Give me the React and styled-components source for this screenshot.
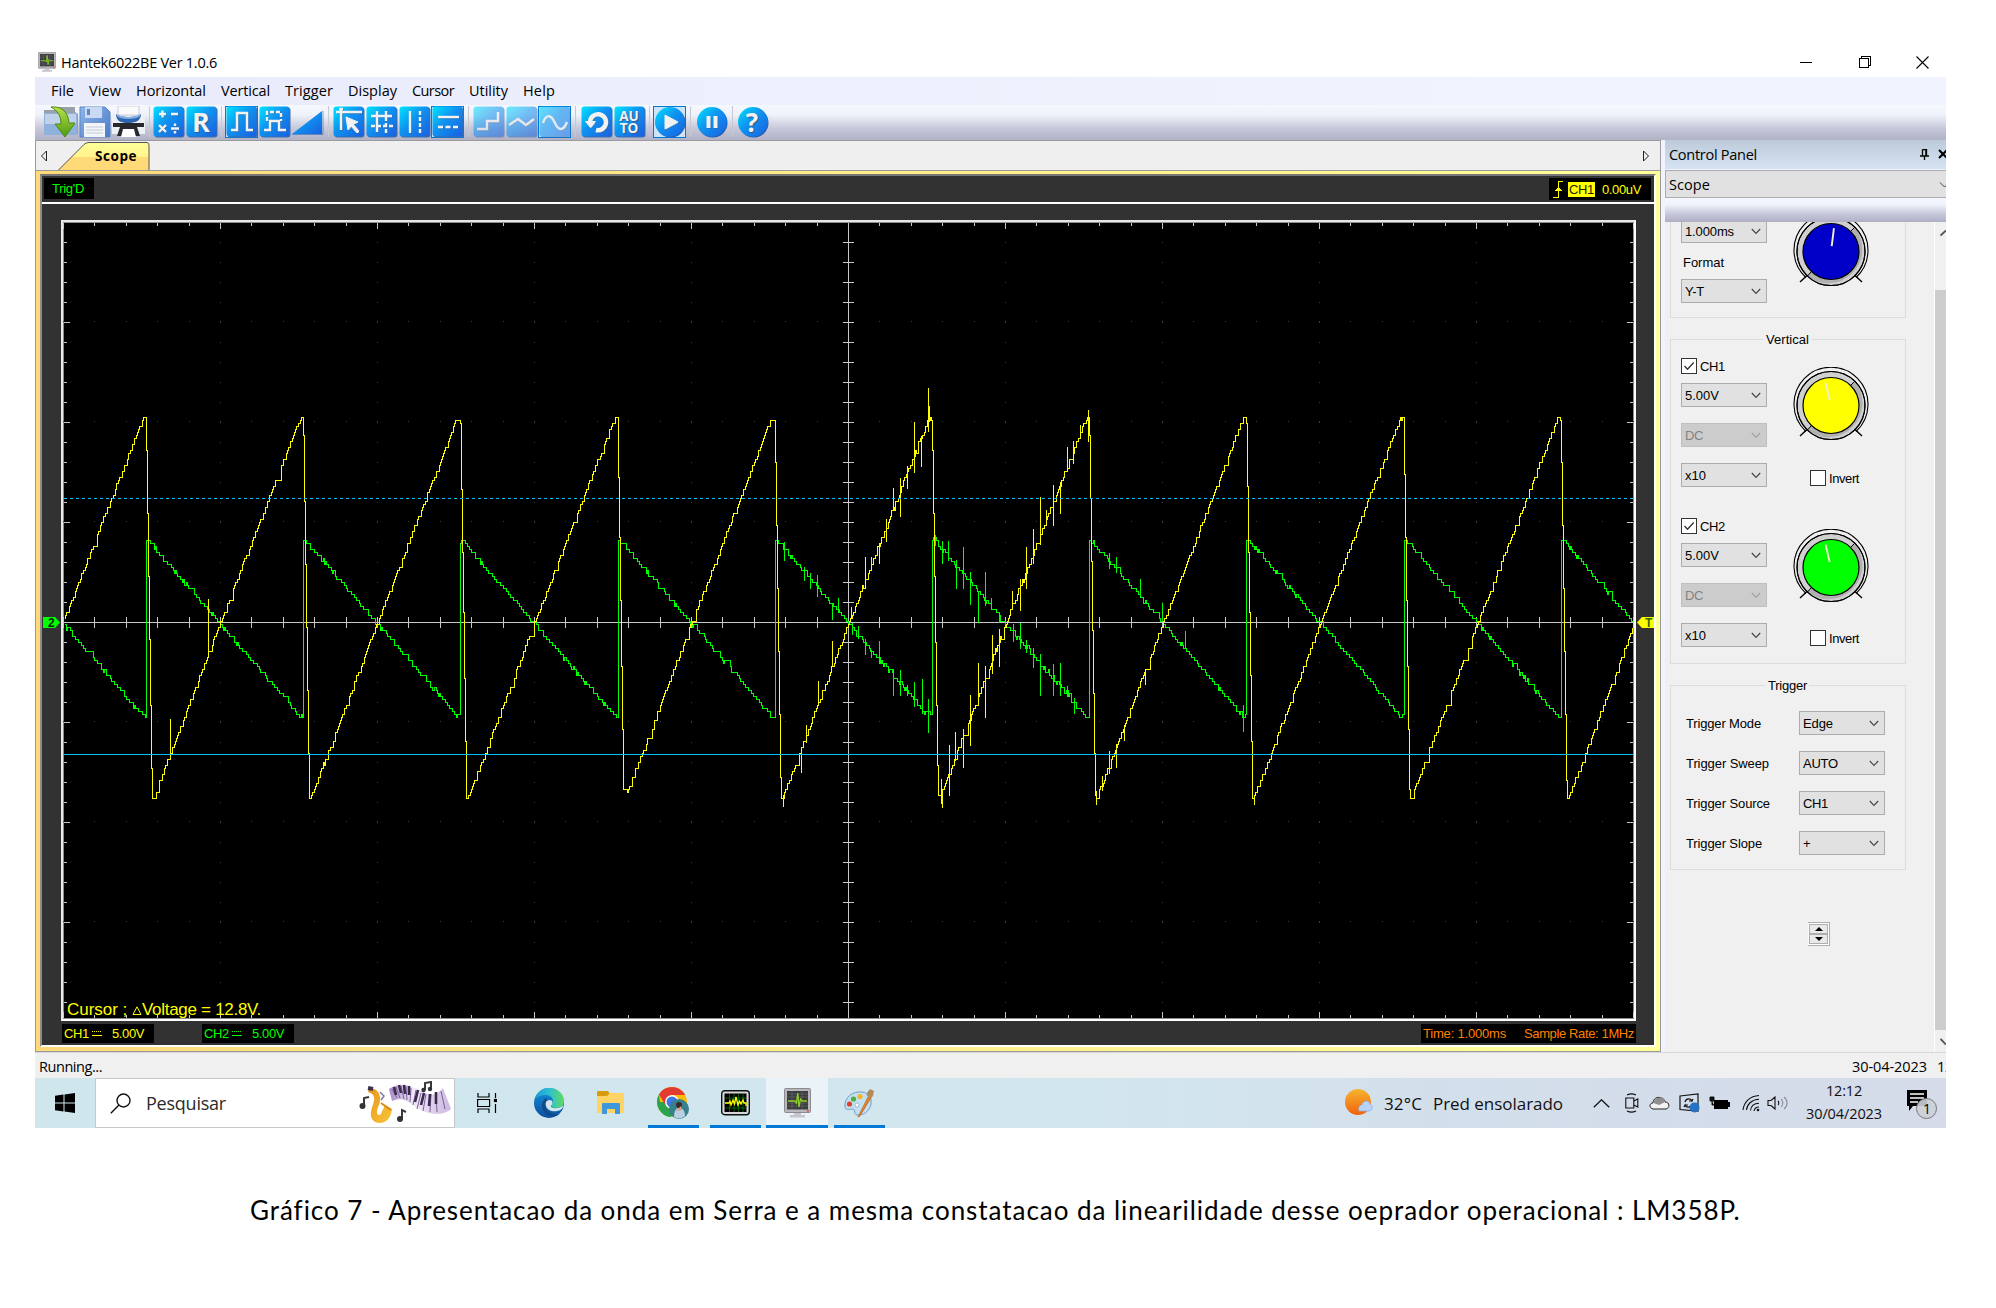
import React, { useLayoutEffect, useRef, useState } from "react";
import styled, { createGlobalStyle, css } from "styled-components";

const UI = '"Open Sans", "Noto Sans", sans-serif';
const ARIAL = '"Liberation Sans", Arial, sans-serif';

const GlobalStyle = createGlobalStyle`
  * { box-sizing: border-box; }
  body { margin: 0; background: #fff; color: #000; overflow: hidden; }
  svg { display: block; flex: none; }
`;

/* ---------- text fitted to a known advance width ---------- */

const FitSpan = styled.span`
  display: inline-block;
  white-space: pre;
  flex: none;
`;

function Fit({ w, children }) {
  const ref = useRef(null);
  const [spacing, setSpacing] = useState(0);
  useLayoutEffect(() => {
    const natural = ref.current.getBoundingClientRect().width;
    setSpacing((w - natural) / Math.max(1, String(children).length));
  }, [w, children]);
  return (
    <FitSpan ref={ref} style={{ letterSpacing: `${spacing}px` }}>
      {children}
    </FitSpan>
  );
}

/* ---------- page and window ---------- */

const Page = styled.main`
  width: 1996px;
  height: 1308px;
  padding: 46px 0 0 35px;
  background: #fff;
  font-family: ${UI};
`;

const Screen = styled.div`
  width: 1911px;
  height: 1082px;
  display: flex;
  flex-direction: column;
  overflow: hidden;
`;

const TitleBar = styled.header`
  height: 31px;
  flex: none;
  display: flex;
  align-items: center;
  padding: 1px 0 0 3px;
  font-size: 14.5px;
  gap: 5px;
`;

const WindowButtons = styled.div`
  margin-left: auto;
  display: flex;
  padding-right: -6px;
`;

const WindowButton = styled.div`
  width: 58.5px;
  height: 30px;
  display: flex;
  align-items: center;
  justify-content: center;
  &:last-child { width: 52px; padding-left: 5px; }
`;

const MenuBar = styled.nav`
  height: 28px;
  flex: none;
  display: flex;
  align-items: center;
  gap: 15px;
  padding-left: 16px;
  font-size: 14.5px;
  line-height: 20px;
  background: linear-gradient(90deg, #e9ebfb, #f1f4fe 80%);
`;

const ToolBar = styled.div`
  height: 35px;
  flex: none;
  display: flex;
  align-items: flex-start;
  padding: 1px 0 0 8px;
  background: linear-gradient(#f5f9fe 0%, #eff2fa 28%, #c9c9dc 65%, #b1b1c7 100%);
`;

const Tool = styled.div`
  width: ${(p) => p.$w || 33}px;
  height: 32px;
  display: flex;
  align-items: center;
  justify-content: center;
  border: ${(p) => (p.$active ? "1px solid #0078d7" : "0")};
  background: ${(p) => (p.$active ? "#cce4f7" : "transparent")};
  opacity: 1;
  svg { opacity: ${(p) => (p.$dim ? 0.55 : 1)}; }
`;

const ToolSep = styled.div`
  width: ${(p) => p.$w}px;
  height: 32px;
  display: flex;
  justify-content: center;
  &::before { content: ""; width: 1px; height: 31px; background: #c9c8cf; }
`;

const Workspace = styled.div`
  height: 912px;
  flex: none;
  display: flex;
`;

const Document = styled.section`
  width: 1626px;
  flex: none;
  display: flex;
  flex-direction: column;
`;

const TabStrip = styled.div`
  height: 30px;
  display: flex;
  align-items: flex-start;
  justify-content: space-between;
  border: 1px solid #9b9b9b;
  border-bottom: 0;
  background: #efefef;
  padding: 0 10px 0 4px;
`;

const TabLeft = styled.div`
  display: flex;
  align-items: flex-start;
  padding-top: 1px;
`;

const Arrow = styled.div`
  padding-top: ${(p) => p.$top}px;
`;

const Tab = styled.div`
  display: grid;
  margin-left: 8px;
  > * { grid-area: 1 / 1; }
`;

const TabText = styled.div`
  padding: 6px 0 0 39px;
  font-size: 13.5px;
  line-height: 17px;
  font-weight: 700;
`;

const YellowFrame = styled.div`
  height: 882px;
  padding: 3px 4px 4px 4px;
  border: 1px solid #9b9b9b;
  background: linear-gradient(90deg, #ffd97a, #ffff99);
`;

const Scope = styled.div`
  height: 873px;
  border: 2px solid;
  border-color: #777 #fff #fff #8c8c8c;
  background: #323232;
  display: flex;
  flex-direction: column;
  font-family: ${ARIAL};
`;

const ScopeTop = styled.div`
  height: 28px;
  flex: none;
  padding: 2px 3px 0 2px;
  display: flex;
  justify-content: space-between;
  border-bottom: 2px solid #fff;
`;

const Readout = styled.div`
  width: ${(p) => p.$w}px;
  height: ${(p) => p.$h || 19}px;
  display: flex;
  align-items: center;
  padding-left: ${(p) => p.$pad || 2}px;
  gap: ${(p) => p.$gap || 0}px;
  margin-right: ${(p) => p.$mr || 0}px;
  background: #000;
  color: ${(p) => p.$c};
  font-size: 13px;
  line-height: 15px;
`;

const TrigSource = styled.span`
  height: 15px;
  padding-left: 1px;
  width: 27px;
  background: #ff0;
  color: #222200;
  margin-right: 7px;
  overflow: hidden;
`;

const PlotRow = styled.div`
  height: 801px;
  margin-top: 16px;
  flex: none;
  display: flex;
`;

const Gutter = styled.div`
  width: ${(p) => p.$w}px;
  padding: 397px 0 0 1px;
`;

const PlotFrame = styled.div`
  position: relative;
  width: 1575px;
  height: 801px;
  border: 2px solid #fff;
  border-color: #e8e8e8 #fff #fff #e8e8e8;
  background: #000;
`;

const CursorText = styled.div`
  position: absolute;
  left: 4px;
  bottom: -1px;
  color: #ff0;
  font-size: 17px;
  line-height: 20px;
  display: flex;
  align-items: center;
`;

const ScopeBottom = styled.div`
  height: 24px;
  padding: 3px 18px 0 20px;
  display: flex;
`;

const Push = styled.div`
  flex: 1;
`;

/* ---------- control panel ---------- */

const Panel = styled.aside`
  flex: 1;
  min-width: 0;
  overflow: hidden;
  padding-left: 4px;
  background: #f1f4fe;
`;

const PanelHead = styled.div`
  height: 30px;
  display: flex;
  align-items: center;
  padding: 0 0 1px 4px;
  border-bottom: 1px solid #eef2fb;
  font-size: 14.5px;
  background: linear-gradient(#bccad9, #d6e3f3);
`;

const HeadIcons = styled.div`
  margin-left: auto;
  display: flex;
  align-items: center;
  gap: 9px;
`;

const PanelSelect = styled.div`
  height: 28px;
  display: flex;
  align-items: center;
  justify-content: space-between;
  padding: 0 0 0 3px;
  border: 1px solid #adadad;
  border-right: 0;
  background: #e1e1e1;
  font-size: 14.5px;
`;

const PanelBar = styled.div`
  height: 24px;
  background: linear-gradient(#f4f8fe 0%, #eef2fb 28%, #c9c9dc 65%, #aeaec6 100%);
`;

const PanelBody = styled.div`
  height: 830px;
  display: flex;
  justify-content: space-between;
  background: #f0f0f0;
  font-family: ${ARIAL};
  font-size: 13px;
`;

const Groups = styled.div`
  padding-left: 5px;
  overflow: hidden;
`;

const Group = styled.fieldset`
  width: 236px;
  height: ${(p) => p.$h}px;
  margin: ${(p) => p.$mt}px 0 0;
  min-width: 0;
  padding: ${(p) => p.$pt || 0}px 0 0 10px;
  border: 1px solid #dcdcdc;
  ${(p) => p.$cut && css`border-top: 0;`}
`;

const Legend = styled.div`
  height: 15px;
  width: ${(p) => p.$w}px;
  margin: -8px 0 0 ${(p) => p.$l}px;
  padding-left: 3px;
  line-height: 15px;
  background: #f0f0f0;
`;

const Columns = styled.div`
  display: flex;
  margin-top: ${(p) => p.$mt || 0}px;
`;

const Column = styled.div`
  width: ${(p) => p.$w}px;
  display: flex;
  flex-direction: column;
  padding-top: ${(p) => p.$pt || 0}px;
  padding-left: ${(p) => p.$pl || 0}px;
`;

const Combo = styled.div`
  width: 86px;
  height: 24px;
  flex: none;
  display: flex;
  align-items: center;
  justify-content: space-between;
  margin-bottom: ${(p) => p.$mb ?? 16}px;
  padding: 0 5px 0 3px;
  border: 1px solid ${(p) => (p.$off ? "#bfbfbf" : "#adadad")};
  background: ${(p) => (p.$off ? "#cccccc" : "#e1e1e1")};
  color: ${(p) => (p.$off ? "#838383" : "#000")};
`;

const FieldLabel = styled.div`
  height: 36px;
  line-height: 40px;
  padding-left: 2px;
`;

const CheckRow = styled.div`
  display: flex;
  align-items: center;
  gap: 3px;
  height: 16px;
  margin-bottom: ${(p) => p.$mb || 0}px;
  margin-left: ${(p) => p.$ml || 0}px;
`;

const Box = styled.div`
  width: 16px;
  height: 16px;
  border: 1px solid #333;
  background: #fff;
`;

const TriggerRow = styled.div`
  display: flex;
  align-items: center;
  justify-content: space-between;
  height: 24px;
  margin-bottom: 16px;
  padding: 0 20px 0 5px;
`;

const Spinner = styled.div`
  width: 22px;
  height: 24px;
  margin: 52px 0 0 138px;
  border: 1px solid #adadad;
  border-left: 0;
  padding: 1px;
  background: #fff;
  display: flex;
  flex-direction: column;
`;

const SpinButton = styled.div`
  flex: 1;
  display: flex;
  align-items: center;
  justify-content: center;
  border: 1px solid #adadad;
  background: #e9e9e9;
`;

const ScrollBar = styled.div`
  width: 12px;
  border-left: 1px solid #fff;
  display: flex;
  flex-direction: column;
  overflow: hidden;
`;

const ScrollArrow = styled.div`
  height: ${(p) => p.$h}px;
  padding: ${(p) => p.$pt}px 0 0 5px;
`;

const ScrollThumb = styled.div`
  height: 740px;
  background: #cdcdcd;
`;

/* ---------- status bar, taskbar and caption ---------- */

const StatusBar = styled.footer`
  height: 26px;
  flex: none;
  display: flex;
  align-items: center;
  justify-content: space-between;
  padding: 1px 0 0 4px;
  border-top: 1px solid #d7d7d7;
  background: #f0f0f0;
  font-size: 14.5px;
`;

const Clock = styled.div`
  width: 94px;
  flex: none;
  display: flex;
  gap: 10px;
  overflow: hidden;
`;

const TaskBar = styled.div`
  height: 50px;
  flex: none;
  display: flex;
  background: linear-gradient(90deg, #cfe6ed 0%, #d2e6ee 55%, #d3deeb 78%, #d5dbe9 100%);
`;

const Start = styled.div`
  width: 60px;
  display: flex;
  align-items: center;
  justify-content: center;
`;

const Search = styled.div`
  width: 360px;
  display: flex;
  align-items: center;
  padding: 0 3px 0 14px;
  border: 1px solid #c4c8ca;
  background: #fff;
  color: #2b2b2b;
  font-size: 18px;
  gap: 15px;
`;

const TaskItem = styled.div`
  width: ${(p) => p.$w || 62}px;
  display: flex;
  align-items: center;
  justify-content: center;
  border: solid transparent;
  border-width: 3px 0;
  background: ${(p) => (p.$active ? "#eaf4f8" : "transparent")};
  ${(p) => p.$open && css`
    background-image: linear-gradient(#0078d7, #0078d7);
    background-repeat: no-repeat;
    background-position: center bottom;
    background-size: ${p.$active ? "62px" : "51px"} 3px;
    background-origin: border-box;
  `}
`;

const Weather = styled.div`
  display: flex;
  align-items: center;
  margin-left: auto;
  font-size: 17px;
  color: #111;
  gap: 11px;
`;

const Tray = styled.div`
  display: flex;
  align-items: center;
  margin-left: 28px;
`;

const TrayIcon = styled.div`
  width: ${(p) => p.$w}px;
  display: flex;
  justify-content: center;
`;

const DateTime = styled.div`
  width: 92px;
  padding-top: 1px;
  display: flex;
  flex-direction: column;
  align-items: center;
  font-size: 14.5px;
  line-height: 23px;
  color: #111;
`;

const Notify = styled.div`
  width: 56px;
  padding-left: 16px;
  display: flex;
  align-items: center;
`;

const Caption = styled.p`
  width: 1700px;
  height: 32px;
  margin: 66px 0 0 215px;
  overflow: hidden;
  font-family: Lato, Carlito, sans-serif;
  font-size: 26px;
  line-height: 32px;
  span { margin-top: -7px; }
`;

/* ---------- toolbar glyphs ---------- */

function Gradients() {
  return (
    <svg width="0" height="0" style={{ position: "absolute" }}>
      <defs>
        <linearGradient id="blue" x1="0" y1="0" x2="1" y2="1">
          <stop offset="0" stopColor="#00e4ff" />
          <stop offset=".45" stopColor="#0f93f0" />
          <stop offset="1" stopColor="#1a5fe0" />
        </linearGradient>
        <linearGradient id="disk" x1="0" y1="0" x2="1" y2="1">
          <stop offset="0" stopColor="#8fb6ea" />
          <stop offset="1" stopColor="#4a7ac6" />
        </linearGradient>
        <linearGradient id="green" x1="0" y1="0" x2="0" y2="1">
          <stop offset="0" stopColor="#b8e04a" />
          <stop offset="1" stopColor="#4f9a10" />
        </linearGradient>
        <linearGradient id="tab" x1="0" y1="0" x2="0" y2="1">
          <stop offset="0" stopColor="#ffff99" />
          <stop offset=".5" stopColor="#fff38c" />
          <stop offset=".52" stopColor="#ffdc78" />
          <stop offset="1" stopColor="#ffd878" />
        </linearGradient>
        <linearGradient id="sun" x1="0" y1="0" x2="0" y2="1">
          <stop offset="0" stopColor="#f6b52f" />
          <stop offset="1" stopColor="#f0620c" />
        </linearGradient>
        <linearGradient id="edgeTop" x1="0" y1="0" x2="1" y2="0">
          <stop offset="0" stopColor="#1c9bd8" />
          <stop offset=".5" stopColor="#2fc0d0" />
          <stop offset="1" stopColor="#5fdc5c" />
        </linearGradient>
        <linearGradient id="edgeBody" x1="0" y1="0" x2="0" y2="1">
          <stop offset="0" stopColor="#1391dd" />
          <stop offset="1" stopColor="#0c4f9c" />
        </linearGradient>
        <linearGradient id="keys" x1="0" y1="0" x2="1" y2="0">
          <stop offset="0" stopColor="#a58bc6" />
          <stop offset=".4" stopColor="#f2e8f8" />
          <stop offset="1" stopColor="#cdb8de" />
        </linearGradient>
        <linearGradient id="sax" x1="0" y1="0" x2="1" y2="1">
          <stop offset="0" stopColor="#e8951c" />
          <stop offset="1" stopColor="#f7c63a" />
        </linearGradient>
      </defs>
    </svg>
  );
}

function BlueTile({ children, round }) {
  return (
    <svg width="32" height="32" viewBox="0 0 32 32" fill="none">
      {round ? (
        <>
          <circle cx="16.8" cy="16.8" r="14.7" fill="#235a9e" />
          <circle cx="16" cy="16" r="15" fill="url(#blue)" />
        </>
      ) : (
        <>
          <rect x="1.5" y="1.5" width="30" height="30" rx="3" fill="#3b6ea8" />
          <rect x=".5" y=".5" width="30" height="30" rx="3" fill="url(#blue)" />
        </>
      )}
      <g stroke="#45628c" strokeWidth="2.4" opacity=".45" transform="translate(1 1)">{children}</g>
      <g stroke="#f2f2f2" strokeWidth="2.4">{children}</g>
    </svg>
  );
}

const TileText = styled.div`
  display: grid;
  place-items: center;
  > * { grid-area: 1 / 1; }
  span {
    z-index: 1;
    color: #f2f2f2;
    font: 700 ${(p) => p.$s}px/${(p) => p.$lh}px ${UI};
    text-align: center;
    white-space: pre;
    text-shadow: 1px 1px 1px #35588c;
    padding-right: 1px;
  }
`;

function TextTile({ children, size, lh, round }) {
  return (
    <TileText $s={size} $lh={lh}>
      <BlueTile round={round} />
      <span>{children}</span>
    </TileText>
  );
}

const OpenIcon = () => (
  <svg width="36" height="32" viewBox="0 0 36 32">
    <path d="M1 4h12l3-3h16v5l3 2v20H1z" fill="#9aa0aa" />
    <path d="M1 7h33v22H1z" fill="#8fb1dc" />
    <path d="M2 8h31v10H2z" fill="#bfd2ea" />
    <path d="M8 1c10-1 17 4 18 16h6l-10 14-10-13h6c0-8-3-13-10-17z" fill="url(#green)" stroke="#4b8a12" />
  </svg>
);

const SaveIcon = () => (
  <svg width="32" height="32" viewBox="0 0 32 32">
    <path d="M1 1h25l5 5v25H1z" fill="url(#disk)" stroke="#5a83c0" />
    <rect x="6" y="1" width="17" height="11" fill="#c9daf2" />
    <rect x="8" y="3" width="3" height="6" fill="#5d86c6" />
    <rect x="5" y="17" width="21" height="14" fill="#f2f5fa" />
    <path d="M7 21h17M7 24h17M7 27h17" stroke="#c3cad6" />
  </svg>
);

const PrintIcon = () => (
  <svg width="35" height="32" viewBox="0 0 35 32">
    <path d="M1 8h33v20H1z" fill="#eceff3" />
    <path d="M7 0h21v9H7z" fill="#fafafa" stroke="#ccd" />
    <path d="M5 8c0 7 5 9 12 9s13-2 13-9c-4 4-21 4-25 0z" fill="#2c64ad" />
    <path d="M6 9c5 4 18 4 23 0" stroke="#84ade0" fill="none" strokeWidth="2" />
    <path d="M2 17h31v4H26l3 9h-5l-2-7H13l-2 7H6l3-9H2z" fill="#26282c" />
    <path d="M12 23h11l2 8H10z" fill="#fff" />
  </svg>
);

const TriangleIcon = () => (
  <svg width="33" height="32" viewBox="0 0 33 32">
    <path d="M1 28L31 5v23z" fill="url(#blue)" />
    <path d="M1 28.5h31V5" stroke="#2468b4" fill="none" opacity=".6" />
  </svg>
);

const Math4 = () => (
  <BlueTile>
    <path d="M6 8h7M9.500 4.500v7M18 8h7M6 19l7 7M13 19l-7 7M18 22.500h8M22 17.500v2.400M22 25v2.400" />
  </BlueTile>
);

/* ---------- small glyphs ---------- */

const Chevron = ({ c = "#444", w = 10 }) => (
  <svg width={w} height="7" viewBox="0 0 10 7">
    <path d="M.8 1l4.200 4.500L9.200 1" fill="none" stroke={c} strokeWidth="1.100" />
  </svg>
);

const Check = () => (
  <svg width="14" height="14" viewBox="0 0 14 14">
    <path d="M2.500 7l3 3.300 6.200-6.800" fill="none" stroke="#333" strokeWidth="1.300" />
  </svg>
);

const Monitor = ({ s }) => (
  <svg width={s} height={(s * 30) / 27} viewBox="0 0 27 30">
    <rect x=".5" y=".5" width="26" height="24" rx="1" fill="#b9b9bd" stroke="#8b8b90" />
    <rect x="3" y="3" width="21" height="18.500" fill="#3c3d3f" />
    <path d="M3 6h21M3 9h21M3 15h21M3 18h21M8 3v18M18 3v18" stroke="#6b6c6e" strokeWidth=".6" />
    <path d="M4 13h7l1.500 2 1.300-10 1.200 14 1.500-8 1.500 2H23" fill="none" stroke="#8dd12a" strokeWidth="1.300" />
    <path d="M10 25h7v2h4v2.500H6V27h4z" fill="#c5c5ca" />
    <circle cx="24" cy="22.800" r=".9" fill="#e23" />
  </svg>
);

function Knob({ color, angle }) {
  return (
    <svg width="78" height="78" viewBox="-39 -39 78 78" fill="none">
      <circle r="34" cy="-.5" fill="#d0d0d0" stroke="#000" strokeWidth="1.100" />
      <path d="M20-21A28.500 28.500 0 0 1-20 20L-23.500 24A34 34 0 0 0 24-24z" fill="#b0b0b0" />
      <path d="M20-21l4-4M-20 20l-3.500 4" stroke="#000" />
      <circle r="34" cy="-.5" stroke="#000" strokeWidth="1.100" />
      <circle r="28" cy="-.5" fill={color} stroke="#000" strokeWidth="1.200" />
      <path d="M-25 25.500A37 37 0 1 1 25 25.500" stroke="#000" strokeWidth="1.100" />
      <path d="M-31 30l7.500-7M31 30l-7.500-7" stroke="#000" strokeWidth="1.400" />
      <path d="M0-6v-18" stroke="#f2f0d0" strokeWidth="1.900" transform={`rotate(${angle})`} />
    </svg>
  );
}

/* ---------- oscilloscope plot ---------- */

const X0 = 63;
const X1 = 1634;
const MIDX = 848;
const MIDY = 622;
const PERIOD = 157.2;
const EDGE = 145.5;

const yellowSpikes = {
  170: [718, 726], 208: [598, 612], 801: [755, 772], 806: [724, 742], 818: [680, 700], 832: [640, 663],
  851: [606, 618], 865: [556, 580], 871: [556, 566], 879: [542, 563], 886: [518, 541], 893: [487, 510],
  900: [477, 516], 907: [465, 488], 914: [421, 472], 921: [435, 466], 928: [387, 431], 929: [405, 421],
  941: [778, 803], 942: [790, 807], 949: [744, 795], 955: [731, 760], 963: [728, 767], 970: [694, 745],
  978: [662, 700], 985: [665, 717], 992: [634, 673], 999: [628, 666], 1012: [590, 607], 1020: [578, 610],
  1026: [546, 588], 1033: [528, 563], 1040: [496, 544], 1046: [509, 525], 1053: [484, 525], 1060: [481, 513],
  1067: [446, 466], 1073: [440, 463], 1080: [424, 436], 1088: [409, 441], 1096: [790, 804], 1102: [775, 790],
  1109: [750, 773], 1116: [743, 767], 1124: [724, 740], 1145: [668, 684], 783: [794, 806], 1254: [795, 804],
};

const greenSpikes = {
  784: [541, 560], 804: [566, 580], 810: [572, 588], 817: [574, 596], 832: [603, 619], 838: [597, 612],
  852: [622, 634], 858: [625, 638], 865: [638, 654], 871: [649, 657], 879: [640, 663], 893: [668, 695],
  900: [669, 695], 907: [684, 695], 914: [681, 706], 922: [678, 713], 928: [698, 732], 935: [534, 545],
  942: [540, 563], 948: [540, 560], 956: [559, 588], 963: [546, 588], 970: [571, 604], 978: [590, 622],
  985: [571, 605], 991: [597, 609], 999: [612, 622], 1013: [623, 641], 1020: [622, 648], 1026: [639, 652],
  1033: [647, 667], 1040: [653, 695], 1053: [663, 695], 1060: [662, 695], 1067: [685, 696], 1074: [697, 713],
  1109: [552, 568], 1116: [556, 572], 1140: [578, 594], 1162: [602, 616], 1185: [630, 644], 1243: [704, 731],
};

function seeded(seed) {
  let s = seed;
  return () => {
    s = (s * 1664525 + 1013904223) % 4294967296;
    return s / 4294967296;
  };
}

function yellowAt(x) {
  const p = (((x - EDGE) % PERIOD) + PERIOD) % PERIOD;
  if (p < 6) return 418 + (p / 6) * 379;
  if (p < 8) return 798;
  if (p < 74.500) return 797 - ((p - 8) / 66.500) * 175;
  if (p < 154) return 622 - ((p - 74.500) / 79.500) * 204;
  return 418;
}

function greenAt(x) {
  const p = (((x - EDGE) % PERIOD) + PERIOD) % PERIOD;
  if (p < 2) return 540;
  if (p > 154) return 716;
  return 540 + ((p - 2) / 152) * 176;
}

function buildTrace(fn, spikes, seed, hold) {
  const rnd = seeded(seed);
  let d = "";
  let last = 0;
  for (let x = 64; x < 1633; x += 1) {
    const busy = x > 850 && x < 1100 ? 1.500 : 1;
    const target = fn(x) + (rnd() - 0.5) * 3.500 * busy;
    const jump = Math.abs(target - last) > 12;
    if (x === 64 || jump || rnd() > hold) last = Math.round(target / 3) * 3 + 0.5;
    d += x === 64 ? `M64.5 ${last}` : `H${x + 0.5}V${last}`;
    const s = spikes[x];
    if (s) d += `V${s[0] + 0.5}V${s[1] + 0.5}V${last}`;
  }
  return d;
}

const yellowPath = buildTrace(yellowAt, yellowSpikes, 11, 0.3);
const greenPath = buildTrace(greenAt, greenSpikes, 5, 0.3);

function buildGrid() {
  let ticks = "";
  let dots = "";
  for (let i = -25; i <= 25; i += 1) {
    const x = Math.round(MIDX + i * 31.4) + 0.5;
    const len = i % 5 === 0 ? 6 : 3;
    ticks += `M${x} 223v${len}M${x} 1018v${-len}`;
    ticks += `M${x} 617v11`;
    for (let r = -3; r <= 3; r += 1) if (r) dots += `M${x - 0.5} ${MIDY + r * 100 - 0.5}h1`;
  }
  for (let j = -39; j <= 39; j += 1) {
    const y = MIDY + j * 20 + 0.5;
    if (y < 225 || y > 1017) continue;
    const len = j % 5 === 0 ? 6 : 3;
    ticks += `M64 ${y}h${len}M1633 ${y}h${-len}M843 ${y}h11`;
    for (let c = -4; c <= 4; c += 1) if (c) dots += `M${Math.round(MIDX + c * 157)} ${y}h1`;
  }
  return { ticks, dots };
}

const grid = buildGrid();

function Plot() {
  return (
    <svg
      width={X1 - X0}
      height="797"
      viewBox={`${X0} 222 ${X1 - X0} 797`}
      shapeRendering="crispEdges"
      fill="none"
    >
      <path d="M63.500 1018V222.500H1633.500V1018.500H63" stroke="#8d8d8d" />
      <path d={grid.dots} stroke="#3c3c3c" />
      <path d={grid.ticks} stroke="#c8c8c8" />
      <path d={`M64 ${MIDY + 0.5}H1633M${MIDX + 0.5} 223V1018`} stroke="#c8c8c8" />
      <path d={greenPath} stroke="#00ff00" />
      <path d={yellowPath} stroke="#ffff00" />
      <path d="M64 498.500H1633" stroke="#00c0ff" strokeDasharray="3 3" />
      <path d="M64 754.500H1633" stroke="#00c0ff" />
    </svg>
  );
}

const Marker = styled.div`
  width: 17px;
  height: 11px;
  overflow: hidden;
  font: 700 12px/12px ${ARIAL};
  background: ${(p) => p.$c};
  color: ${(p) => (p.$right ? "#2c6a00" : "#002800")};
  padding-left: ${(p) => (p.$right ? 8 : 5)}px;
  clip-path: ${(p) =>
    p.$right ? "polygon(5px 0, 100% 0, 100% 100%, 5px 100%, 0 50%)" : "polygon(0 0, 12px 0, 100% 50%, 12px 100%, 0 100%)"};
`;

const DcGlyph = ({ c }) => (
  <svg width="10" height="5" viewBox="0 0 10 5" shapeRendering="crispEdges">
    <path d="M0 .5h10" stroke={c} strokeDasharray="1 1" />
    <path d="M0 4.500h10" stroke={c} />
  </svg>
);

/* ---------- panel parts ---------- */

function Select({ children, w, off, mb }) {
  return (
    <Combo $off={off} $mb={mb}>
      <Fit w={w}>{children}</Fit>
      <Chevron c={off ? "#a3a3a3" : "#444"} />
    </Combo>
  );
}

function Channel({ name, color, mt, knobTop, invertTop }) {
  return (
    <Columns $mt={mt}>
      <Column $w={111}>
        <CheckRow $mb={9}>
          <Box><Check /></Box>
          <Fit w={25}>{name}</Fit>
        </CheckRow>
        <Select w={34}>5.00V</Select>
        <Select w={18} off>DC</Select>
        <Select w={21} mb={0}>x10</Select>
      </Column>
      <Column $w={100} $pt={knobTop}>
        <Knob color={color} angle={-13} />
        <CheckRow $ml={18} style={{ marginTop: invertTop }}>
          <Box />
          <Fit w={30}>Invert</Fit>
        </CheckRow>
      </Column>
    </Columns>
  );
}

function ControlPanel() {
  return (
    <Panel>
      <PanelHead>
        <Fit w={88}>Control Panel</Fit>
        <HeadIcons>
          <svg width="9" height="11" viewBox="0 0 9 11" fill="none" stroke="#000">
            <path d="M2.500.500h4v6M2.500.500v6M0 7h9M4.500 7v4" strokeWidth="1.300" />
            <path d="M6 1v6" strokeWidth="1.500" />
          </svg>
          <svg width="8" height="10" viewBox="0 0 8 10">
            <path d="M1 1l8 8M9 1L1 9" stroke="#000" strokeWidth="2" />
          </svg>
        </HeadIcons>
      </PanelHead>
      <PanelSelect>
        <Fit w={41}>Scope</Fit>
        <svg width="7" height="7" viewBox="0 0 7 7">
          <path d="M1 1.500l4.500 4.500L10 1.500" fill="none" stroke="#444" />
        </svg>
      </PanelSelect>
      <PanelBar />
      <PanelBody>
        <Groups>
          <Group $h={96} $mt={0} $cut>
            <Columns $mt={-3}>
              <Column $w={111}>
                <Select w={49} mb={0}>1.000ms</Select>
                <FieldLabel><Fit w={41}>Format</Fit></FieldLabel>
                <Select w={19}>Y-T</Select>
              </Column>
              <Column $w={100} $pt={-7}>
                <div style={{ marginTop: -6 }}>
                  <Knob color="#0000c8" angle={7} />
                </div>
              </Column>
            </Columns>
          </Group>
          <Group $h={325} $mt={21}>
            <Legend $w={48} $l={82}><Fit w={43}>Vertical</Fit></Legend>
            <Channel name="CH1" color="#ffff00" mt={11} knobTop={9} invertTop={25} />
            <Channel name="CH2" color="#00ff00" mt={31} knobTop={11} invertTop={23} />
          </Group>
          <Group $h={185} $mt={21}>
            <Legend $w={44} $l={84}><Fit w={39}>Trigger</Fit></Legend>
            <Columns $mt={18} />
            <TriggerRow><Fit w={75}>Trigger Mode</Fit><Select w={30} mb={0}>Edge</Select></TriggerRow>
            <TriggerRow><Fit w={83}>Trigger Sweep</Fit><Select w={35} mb={0}>AUTO</Select></TriggerRow>
            <TriggerRow><Fit w={84}>Trigger Source</Fit><Select w={25} mb={0}>CH1</Select></TriggerRow>
            <TriggerRow><Fit w={76}>Trigger Slope</Fit><Select w={8} mb={0}>+</Select></TriggerRow>
          </Group>
          <Spinner>
            <SpinButton><svg width="8" height="4"><path d="M0 4L4 0l4 4z" /></svg></SpinButton>
            <SpinButton><svg width="8" height="4"><path d="M0 0l4 4 4-4z" /></svg></SpinButton>
          </Spinner>
        </Groups>
        <ScrollBar>
          <ScrollArrow $h={68} $pt={7}>
            <svg width="6" height="8" viewBox="0 0 6 8"><path d="M.5 6.500L6 1.500" stroke="#555" strokeWidth="1.800" /></svg>
          </ScrollArrow>
          <ScrollThumb />
          <ScrollArrow $h={22} $pt={8}>
            <svg width="6" height="8" viewBox="0 0 6 8"><path d="M.5 1L6 6.500" stroke="#555" strokeWidth="1.800" /></svg>
          </ScrollArrow>
        </ScrollBar>
      </PanelBody>
    </Panel>
  );
}

/* ---------- taskbar drawings ---------- */

const WindowsLogo = () => (
  <svg width="20" height="20" viewBox="0 0 20 20">
    <path d="M0 2.800L8.500 1.500v8H0zM9.500 1.400L20 0v9.500H9.500zM0 10.500h8.500v8L0 17.200zM9.500 10.500H20V20L9.500 18.600z" />
  </svg>
);

const MusicArt = () => (
  <svg width="92" height="44" viewBox="0 0 92 44" fill="none">
    <path d="M30 8C44-1 54 6 64 11s14 2 20-4l8 21c-8 7-20 6-30 1S46 14 33 20z" fill="url(#keys)" />
    <path d="M33 8l5 9M37 6l4 11M42 5l3 13M47 5l1 14M52 7l-1 14M57 9l-3 15M62 12l-4 16M67 13l-3 17M72 13l-1 18M77 12l1 19M82 10l4 18" stroke="#7b5f9b" />
    <path d="M35 6l2 8M40 4l2 8M45 4l1 9M50 5v9M59 9l-3 12M65 12l-3 12M71 13l-1 12M77 11v12" stroke="#3a2a4c" strokeWidth="2.600" />
    <path d="M10 7c6 0 10 3 11 9 1 7-3 10-3 15 0 3 2 4 4 2l4-9 7 4c-1 9-6 14-12 14-7 0-10-5-9-11 1-7 4-10 3-15-1-3-3-4-6-5z" fill="url(#sax)" />
    <path d="M9 7l5 1" stroke="#40304a" strokeWidth="4" />
    <path d="M22 22l10 7" stroke="#d98a10" strokeWidth="2" />
    <path d="M21 11l4 4-3 4" stroke="#8a7aa0" strokeWidth="1.500" />
    <path d="M5 25V17l5-1M43 38V29l4 2M66 9V2l6-1v7" stroke="#3a3a3e" strokeWidth="2" />
    <g fill="#333438"><circle cx="3.500" cy="25" r="3" /><circle cx="41" cy="38" r="3" /><circle cx="64.500" cy="9" r="2.200" /><circle cx="71" cy="8" r="2.200" /></g>
  </svg>
);

const TaskViewIcon = () => (
  <svg width="20" height="20" viewBox="0 0 20 20" fill="none" stroke="#000" strokeWidth="1.200">
    <path d="M1 0v4h11V0M1 20v-4h11v4M.6 6.500h12v7H.6zM18.500 0v5M18.500 11v9" />
    <rect x="17.500" y="6.500" width="2" height="2" fill="#000" />
  </svg>
);

const EdgeIcon = () => (
  <svg width="30" height="30" viewBox="0 0 30 30">
    <circle cx="15" cy="15" r="15" fill="url(#edgeBody)" />
    <path d="M1 11C4 3 9 0 15 0c9 0 15 6 15 13 0 5-4 7-8 7-3 0-5-1-5-2s2-2 2-5c0-3-3-6-7-6-5 0-9 2-11 4z" fill="url(#edgeTop)" />
    <path d="M12 10c-4 2-6 10-1 15 4 4 10 4 15 1-6 2-14-1-14-8 0-2 1-4 2-5z" fill="#114a8b" />
    <path d="M16 12c-4 0-5 3-4 6 1 4 6 6 11 5 2 0 4-1 5.500-3l1-3c-3 3-7 3.500-10 3-3-.6-3-2-2-3 2-2 1-5-1.500-5z" fill="#d2e6ee" />
  </svg>
);

const FolderIcon = () => (
  <svg width="28" height="24" viewBox="0 0 28 24">
    <path d="M0 1a1 1 0 0 1 1-1h10l2 3-2 3H0z" fill="#d99a0b" />
    <path d="M0 5h10l3-3h13a1 1 0 0 1 1 1v19H0z" fill="#ffd464" />
    <path d="M5 13a1 1 0 0 1 1-1h16a1 1 0 0 1 1 1v10h-5v-5h-8v5H5z" fill="#3f97dc" />
  </svg>
);

const ChromeIcon = () => (
  <svg width="32" height="32" viewBox="0 0 32 32">
    <circle cx="15" cy="15" r="15" fill="#fbbc09" />
    <path d="M15 15L2 7.500A15 15 0 0 1 28 8H15z" fill="#e33b2e" />
    <path d="M15 15H3L2 7.500A15 15 0 0 0 14 30l7-12z" fill="#2ba24c" />
    <path d="M2 7.500L9 19l6-4V8H28A15 15 0 0 0 2 7.500z" fill="#e33b2e" />
    <circle cx="15" cy="15" r="7" fill="#fff" />
    <circle cx="15" cy="15" r="5.500" fill="#3c79e6" />
    <circle cx="22" cy="22" r="10" fill="#38808c" />
    <circle cx="22" cy="18" r="3" fill="#3b2a2a" />
    <path d="M17 30c0-6 2-9 5-9s6 2 6 8c-3 3-8 3-11 1z" fill="#b9cfe2" />
    <path d="M19 24l5-5 1 4z" fill="#dd9a7c" />
  </svg>
);

const ScopeIcon = () => (
  <svg width="29" height="26" viewBox="0 0 29 26">
    <rect x=".7" y=".7" width="27.600" height="24" rx="3" fill="#d8d8d8" stroke="#111" strokeWidth="1.400" />
    <rect x="3.500" y="3.500" width="22" height="18.500" fill="#000" />
    <path d="M4 8h21M4 13h21M4 18h21M8.500 4v18M13 4v18M17.500 4v18M22 4v18" stroke="#0a7a0a" strokeWidth=".8" />
    <path d="M4 13h4l1-2 1 4 2-5 1.500 4 1.500-7 2 8 1.500-4 1.500 3 2-4 1 3h2v3" fill="none" stroke="#ff0" strokeWidth="1.300" />
  </svg>
);

const PaintIcon = () => (
  <svg width="30" height="30" viewBox="0 0 30 30">
    <path d="M1 19C0 9 9 3 18 4c7 1 10 6 9 12-1 7-8 12-14 11-4-1-1-5-4-6-3 0-7 2-8-2z" fill="#c3dff0" stroke="#6f9fc4" />
    <circle cx="5.500" cy="16" r="2.600" fill="#d8422f" />
    <circle cx="9.500" cy="11" r="2.600" fill="#4fae3c" />
    <circle cx="16" cy="8.500" r="2.600" fill="#f3b628" />
    <circle cx="13" cy="17" r="2" fill="#fff" stroke="#7ba7c6" strokeWidth=".7" />
    <path d="M24 9L14 29l1.500-.5L27 10z" fill="#e8822a" stroke="#a95a17" strokeWidth=".6" />
    <path d="M23 8c-1-4 2-5 3-7l4 2c-1 3 0 5-3 7z" fill="#b48a5c" />
  </svg>
);

const WeatherIcon = () => (
  <svg width="28" height="28" viewBox="0 0 28 28">
    <circle cx="13" cy="13" r="13" fill="url(#sun)" />
    <path d="M14 22c-1-4 1-6 3-6 1-5 7-5 8-1 3 1 3 6 0 7z" fill="#b8d2fa" stroke="#86aef0" strokeWidth=".7" />
  </svg>
);

function TrayIcons() {
  return (
    <Tray>
      <TrayIcon $w={20}>
        <svg width="17" height="9" viewBox="0 0 17 9"><path d="M.8 8.200L8.500.8l7.700 7.400" fill="none" stroke="#111" strokeWidth="1.300" /></svg>
      </TrayIcon>
      <TrayIcon $w={41}>
        <svg width="14" height="20" viewBox="0 0 14 20" fill="none" stroke="#111" strokeWidth="1.100">
          <path d="M.8 5h8v10h-8zM8.800 8l4-2v8l-4-2M2 2c3-1.500 6-1.500 9 0M2 18c3 1.500 6 1.500 9 0" />
        </svg>
      </TrayIcon>
      <TrayIcon $w={15}>
        <svg width="21" height="14" viewBox="0 0 21 14">
          <path d="M4 13C0 12 0 7 4 7c0-4 4-7 8-5 2 0 4 2 4 4 5 0 5 6 1 7z" fill="#f2f2f2" stroke="#222" />
          <path d="M4.500 7C5 3 8 1 12 2c2 0 4 2 4 4l-6 3z" fill="#8e8e8e" />
        </svg>
      </TrayIcon>
      <TrayIcon $w={45}>
        <svg width="21" height="20" viewBox="0 0 21 20" fill="none" stroke="#111" strokeWidth="1.200">
          <path d="M1 3l18-2v17L1 16.500zM6 9c1-4 6-4 7-1l1-2M13 8h-3M13 11c-1 4-6 4-7 1l-1 2M6 12h3" />
          <circle cx="15.500" cy="14.500" r="5" fill="#2372c4" stroke="none" />
        </svg>
      </TrayIcon>
      <TrayIcon $w={15}>
        <svg width="21" height="14" viewBox="0 0 21 14">
          <path d="M5 4h14v2h2v5h-2v2H5z" />
          <path d="M1 1v4h4V1M3 5v4h2M2 0v1M4 0v1" fill="#111" stroke="#111" />
        </svg>
      </TrayIcon>
      <TrayIcon $w={48}>
        <svg width="18" height="18" viewBox="0 0 18 18" fill="none" stroke="#111" strokeWidth="1.100">
          <path d="M1 16C2 8 8 2 17 1.500M4.500 16C5 10 10 5.500 17 5.300M8.500 16.500C9 12 12 9.300 17 9.200M12 17c.5-2.500 2-4 5-4" />
          <circle cx="16" cy="16" r="1.300" fill="#111" stroke="none" />
        </svg>
      </TrayIcon>
      <TrayIcon $w={6}>
        <svg width="22" height="16" viewBox="0 0 22 16" fill="none" stroke="#111" strokeWidth="1.100">
          <path d="M1 5.500h3L8 2v12L4 10.500H1zM11 6c1 1 1 3 0 4" />
          <path d="M14 4c2.500 2 2.500 6 0 8M17 2c4 3 4 9 0 12" stroke="#8d9097" />
        </svg>
      </TrayIcon>
    </Tray>
  );
}

const MENU = [
  ["File", 23], ["View", 32], ["Horizontal", 70], ["Vertical", 49], ["Trigger", 48],
  ["Display", 49], ["Cursor", 42], ["Utility", 39], ["Help", 32],
];

export default function App() {
  return (
    <Page>
      <GlobalStyle />
      <Gradients />
      <Screen>
        <TitleBar>
          <Monitor s={18} />
          <Fit w={156}>Hantek6022BE Ver 1.0.6</Fit>
          <WindowButtons>
            <WindowButton><svg width="12" height="1"><rect width="12" height="1" /></svg></WindowButton>
            <WindowButton>
              <svg width="12" height="12" viewBox="0 0 12 12" fill="none" stroke="#000" shapeRendering="crispEdges">
                <path d="M.5 2.500h9v9h-9zM2.500 2V.5h9v9H10" />
              </svg>
            </WindowButton>
            <WindowButton>
              <svg width="13" height="13" viewBox="0 0 13 13"><path d="M.5.5l12 12M12.500.5l-12 12" stroke="#000" strokeWidth="1.100" /></svg>
            </WindowButton>
          </WindowButtons>
        </TitleBar>

        <MenuBar>
          {MENU.map(([label, w]) => <Fit key={label} w={w}>{label}</Fit>)}
        </MenuBar>

        <ToolBar>
          <Tool $w={35}><OpenIcon /></Tool>
          <Tool><SaveIcon /></Tool>
          <Tool $w={35}><PrintIcon /></Tool>
          <ToolSep $w={6} />
          <Tool><Math4 /></Tool>
          <Tool><TextTile size={27} lh={30}>R</TextTile></Tool>
          <ToolSep $w={7} />
          <Tool $active><BlueTile><path d="M5 24h6V7h10v17h6" /></BlueTile></Tool>
          <Tool>
            <BlueTile>
              <path d="M5 24h6v-9h9v9h7" />
              <path d="M8 15V6h14v9" strokeDasharray="4 2" />
            </BlueTile>
          </Tool>
          <Tool><TriangleIcon /></Tool>
          <ToolSep $w={8} />
          <Tool>
            <BlueTile>
              <path d="M8 2v22M3 6h26M6 3h4" />
              <path d="M13 11l12 5-5 2 6 7-2 2-6-7-3 4z" fill="#f2f2f2" strokeWidth="1" />
            </BlueTile>
          </Tool>
          <Tool>
            <BlueTile>
              <path d="M5 10h21M11 5v21" />
              <path d="M20 5v22M5 20h22" strokeDasharray="4 2" />
            </BlueTile>
          </Tool>
          <Tool>
            <BlueTile>
              <path d="M11 5v22" />
              <path d="M21 5v22" strokeDasharray="4 2" />
            </BlueTile>
          </Tool>
          <Tool $active>
            <BlueTile>
              <path d="M6 11h21" />
              <path d="M6 21h21" strokeDasharray="5 2.500" />
            </BlueTile>
          </Tool>
          <ToolSep $w={8} />
          <Tool $dim><BlueTile><path d="M4 23h10v-8h11V6" /></BlueTile></Tool>
          <Tool $dim><BlueTile><path d="M3 19l9-6 8 6 8-6" /></BlueTile></Tool>
          <Tool $dim $active><BlueTile><path d="M4 17c3-9 8-9 12 0s9 7 12-1" /></BlueTile></Tool>
          <ToolSep $w={9} />
          <Tool>
            <BlueTile>
              <path d="M9 16a8 8 0 1 1 6 8" strokeWidth="4.500" />
              <path d="M4.500 15.500h10l-5 6z" fill="#f2f2f2" strokeWidth="1" />
            </BlueTile>
          </Tool>
          <Tool><TextTile size={13.5} lh={12.5}>{"AU\nTO"}</TextTile></Tool>
          <ToolSep $w={7} />
          <Tool $active><BlueTile round><path d="M11 9l13 7-13 7z" fill="#f2f2f2" strokeWidth="1" /></BlueTile></Tool>
          <ToolSep $w={9} />
          <Tool><BlueTile round><path d="M12.500 10v12M19.500 10v12" strokeWidth="4" /></BlueTile></Tool>
          <ToolSep $w={8} />
          <Tool><TextTile size={26} lh={30} round>?</TextTile></Tool>
        </ToolBar>

        <Workspace>
          <Document>
            <TabStrip>
              <TabLeft>
                <Arrow $top={8}>
                  <svg width="8" height="12" viewBox="0 0 8 12"><path d="M6.500 1v10L1.500 6z" fill="none" stroke="#222" /></svg>
                </Arrow>
                <Tab>
                  <svg width="94" height="29" viewBox="0 0 94 29">
                    <path d="M2 28.500L28 2.500Q30 .5 33 .5H91q2 0 2 3V29z" fill="url(#tab)" />
                    <path d="M2 28.500L28 2.500Q30 .5 33 .5H91q2 0 2 3V29" fill="none" stroke="#555" />
                  </svg>
                  <TabText><Fit w={42}>Scope</Fit></TabText>
                </Tab>
              </TabLeft>
              <Arrow $top={9}>
                <svg width="8" height="12" viewBox="0 0 8 12"><path d="M1.500 1v10l5-5z" fill="none" stroke="#222" /></svg>
              </Arrow>
            </TabStrip>
            <YellowFrame>
              <Scope>
                <ScopeTop>
                  <Readout $w={50} $h={21} $pad={8} $c="#00ff00"><Fit w={32}>Trig'D</Fit></Readout>
                  <Readout $w={102} $h={22} $pad={4} $c="#ffff00">
                    <svg width="10" height="17" viewBox="0 0 10 17" fill="none" stroke="#ff0" shapeRendering="crispEdges">
                      <path d="M0 16.500h5.500V.5H10" />
                      <path d="M2 9.500h7L5.500 6z" fill="#ff0" stroke="none" />
                    </svg>
                    <span style={{ width: 5 }} />
                    <TrigSource><Fit w={25}>CH1</Fit></TrigSource>
                    <Fit w={39}>0.00uV</Fit>
                  </Readout>
                </ScopeTop>
                <PlotRow>
                  <Gutter $w={19}><Marker $c="#00ff00">2</Marker></Gutter>
                  <PlotFrame>
                    <Plot />
                    <CursorText>
                      <Fit w={65}>{"Cursor ; "}</Fit>
                      <svg width="10" height="9" viewBox="0 0 10 9"><path d="M1 8.500L5 .8l4 7.700z" fill="none" stroke="#ff0" /></svg>
                      <Fit w={119}>Voltage = 12.8V.</Fit>
                    </CursorText>
                  </PlotFrame>
                  <Gutter $w={18}><Marker $right $c="#ffff00">T</Marker></Gutter>
                </PlotRow>
                <ScopeBottom>
                  <Readout $w={92} $mr={48} $gap={3} $c="#ffff00">
                    <Fit w={25}>CH1</Fit><DcGlyph c="#ff0" /><span style={{ width: 4 }} /><Fit w={32}>5.00V</Fit>
                  </Readout>
                  <Readout $w={92} $gap={3} $c="#00ff00">
                    <Fit w={25}>CH2</Fit><DcGlyph c="#0f0" /><span style={{ width: 4 }} /><Fit w={32}>5.00V</Fit>
                  </Readout>
                  <Push />
                  <Readout $w={215} $gap={18} $c="#ff8000">
                    <Fit w={83}>Time: 1.000ms</Fit><Fit w={110}>Sample Rate: 1MHz</Fit>
                  </Readout>
                </ScopeBottom>
              </Scope>
            </YellowFrame>
          </Document>
          <ControlPanel />
        </Workspace>

        <StatusBar>
          <Fit w={63}>Running...</Fit>
          <Clock><Fit w={75}>30-04-2023</Fit><Fit w={16}>12</Fit></Clock>
        </StatusBar>

        <TaskBar>
          <Start><WindowsLogo /></Start>
          <Search>
            <svg width="21" height="21" viewBox="0 0 21 21" fill="none" stroke="#111" strokeWidth="1.400">
              <circle cx="13.500" cy="7.500" r="6.500" /><path d="M9 12L.8 20.200" />
            </svg>
            <Fit w={80}>Pesquisar</Fit>
            <Push />
            <MusicArt />
          </Search>
          <TaskItem $w={63}><TaskViewIcon /></TaskItem>
          <TaskItem><EdgeIcon /></TaskItem>
          <TaskItem><FolderIcon /></TaskItem>
          <TaskItem $open><ChromeIcon /></TaskItem>
          <TaskItem $open><ScopeIcon /></TaskItem>
          <TaskItem $open $active><Monitor s={27} /></TaskItem>
          <TaskItem $open><PaintIcon /></TaskItem>
          <Weather>
            <WeatherIcon />
            <Fit w={38}>32°C</Fit>
            <Fit w={130}>Pred ensolarado</Fit>
          </Weather>
          <TrayIcons />
          <DateTime style={{ marginLeft: 17 }}>
            <Fit w={36}>12:12</Fit>
            <Fit w={76}>30/04/2023</Fit>
          </DateTime>
          <Notify>
            <svg width="32" height="32" viewBox="0 0 32 32">
              <path d="M1 3h20v16H7l-4 5v-5H1z" />
              <path d="M4 7h14M4 11h14M4 15h8" stroke="#fff" strokeWidth="1.300" />
              <circle cx="20.500" cy="21.500" r="10" fill="#ccd0d8" fillOpacity=".9" stroke="#777" />
              <text x="17" y="27" fontFamily="Open Sans" fontSize="14">1</text>
            </svg>
          </Notify>
        </TaskBar>
      </Screen>
      <Caption>
        <Fit w={1490}>
          Gráfico 7 - Apresentacao da onda em Serra e a mesma constatacao da linearilidade desse oeprador operacional : LM358P.
        </Fit>
      </Caption>
    </Page>
  );
}
